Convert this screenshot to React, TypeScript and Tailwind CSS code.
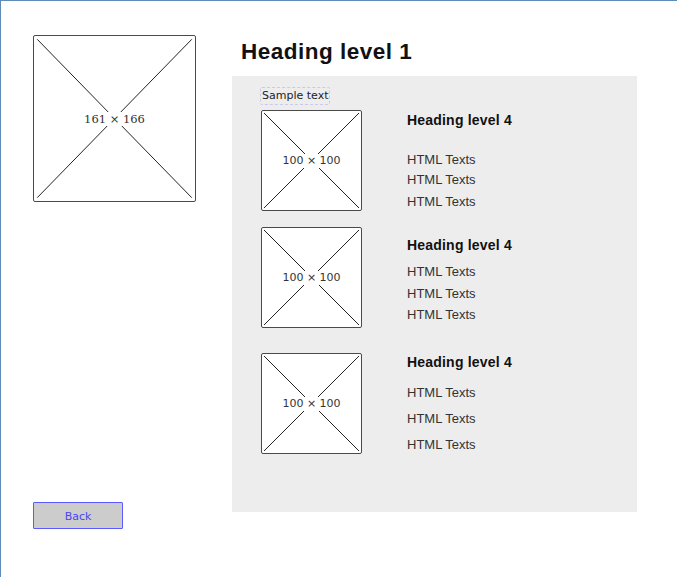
import React from "react";

function Placeholder({
  w,
  h,
  label,
  serif,
}: {
  w: string;
  h: string;
  label: string;
  serif?: boolean;
}) {
  return (
    <div
      className={`relative ${w} ${h} shrink-0 bg-white border-[1.5px] border-[#4a4a4a] rounded-[2px] flex items-center justify-center`}
    >
      <svg
        className="absolute inset-0 w-full h-full"
        viewBox="0 0 100 100"
        preserveAspectRatio="none"
      >
        <line x1="2" y1="2" x2="98" y2="98" stroke="#222" strokeWidth="1" vectorEffect="non-scaling-stroke" />
        <line x1="98" y1="2" x2="2" y2="98" stroke="#222" strokeWidth="1" vectorEffect="non-scaling-stroke" />
      </svg>
      <span
        className={
          serif
            ? "relative bg-white px-[3px] text-[11.5px] leading-[14px] text-[#333] [font-family:'DejaVu_Serif',serif]"
            : "relative bg-white px-[3px] text-[11px] leading-[14px] text-[#333] [font-family:'DejaVu_Sans',sans-serif]"
        }
      >
        {label}
      </span>
    </div>
  );
}

const h4 = "text-[14px] leading-[16px] font-bold tracking-[0.2px] text-[#111]";
const tx = "text-[13px] leading-[16px] text-[#333]";

export default function App() {
  return (
    <div className="w-[677px] h-[577px] bg-white border-l border-t border-[#5f8bb8] flex overflow-hidden [font-family:'Liberation_Sans',Arial,sans-serif]">
      {/* Left column */}
      <div className="ml-[32px] mt-[34px] w-[163px] flex flex-col">
        <Placeholder w="w-[163px]" h="h-[167px]" label="161 × 166" serif />
        <button className="mt-[300px] w-[90px] h-[27px] pt-[3px] bg-[#cccccc] border border-[#5a5aff] rounded-[1px] text-[11px] text-[#4646f5] [font-family:'DejaVu_Sans',sans-serif] flex items-center justify-center">
          Back
        </button>
      </div>

      {/* Right column */}
      <div className="ml-[36px] flex flex-col">
        <h1 className="mt-[38px] pl-[9px] text-[22.5px] leading-[25px] font-bold tracking-[0.5px] text-[#111]">
          Heading level 1
        </h1>
        <div className="mt-[12px] w-[405px] h-[436px] bg-[#ededed] pt-[11px] pl-[28px] flex flex-col">
          <div className="w-[70px] h-[18px] border border-dashed border-[#c9c9ef] rounded-[2px] pl-[1px] text-[11px] leading-[16px] text-[#222] [font-family:'DejaVu_Sans',sans-serif]">
            Sample text
          </div>

          {/* Row 1 */}
          <div className="mt-[5px] ml-[1px] flex">
            <Placeholder w="w-[101px]" h="h-[101px]" label="100 × 100" />
            <div className="ml-[45px] flex flex-col">
              <div className={`${h4} mt-[2px]`}>Heading level 4</div>
              <div className={`${tx} mt-[24px]`}>HTML Texts</div>
              <div className={`${tx} mt-[4px]`}>HTML Texts</div>
              <div className={`${tx} mt-[6px]`}>HTML Texts</div>
            </div>
          </div>

          {/* Row 2 */}
          <div className="mt-[16px] ml-[1px] flex">
            <Placeholder w="w-[101px]" h="h-[101px]" label="100 × 100" />
            <div className="ml-[45px] flex flex-col">
              <div className={`${h4} mt-[10px]`}>Heading level 4</div>
              <div className={`${tx} mt-[11px]`}>HTML Texts</div>
              <div className={`${tx} mt-[6px]`}>HTML Texts</div>
              <div className={`${tx} mt-[5px]`}>HTML Texts</div>
            </div>
          </div>

          {/* Row 3 */}
          <div className="mt-[25px] ml-[1px] flex">
            <Placeholder w="w-[101px]" h="h-[101px]" label="100 × 100" />
            <div className="ml-[45px] flex flex-col">
              <div className={`${h4} mt-[1px]`}>Heading level 4</div>
              <div className={`${tx} mt-[15px]`}>HTML Texts</div>
              <div className={`${tx} mt-[10px]`}>HTML Texts</div>
              <div className={`${tx} mt-[10px]`}>HTML Texts</div>
            </div>
          </div>
        </div>
      </div>
    </div>
  );
}
